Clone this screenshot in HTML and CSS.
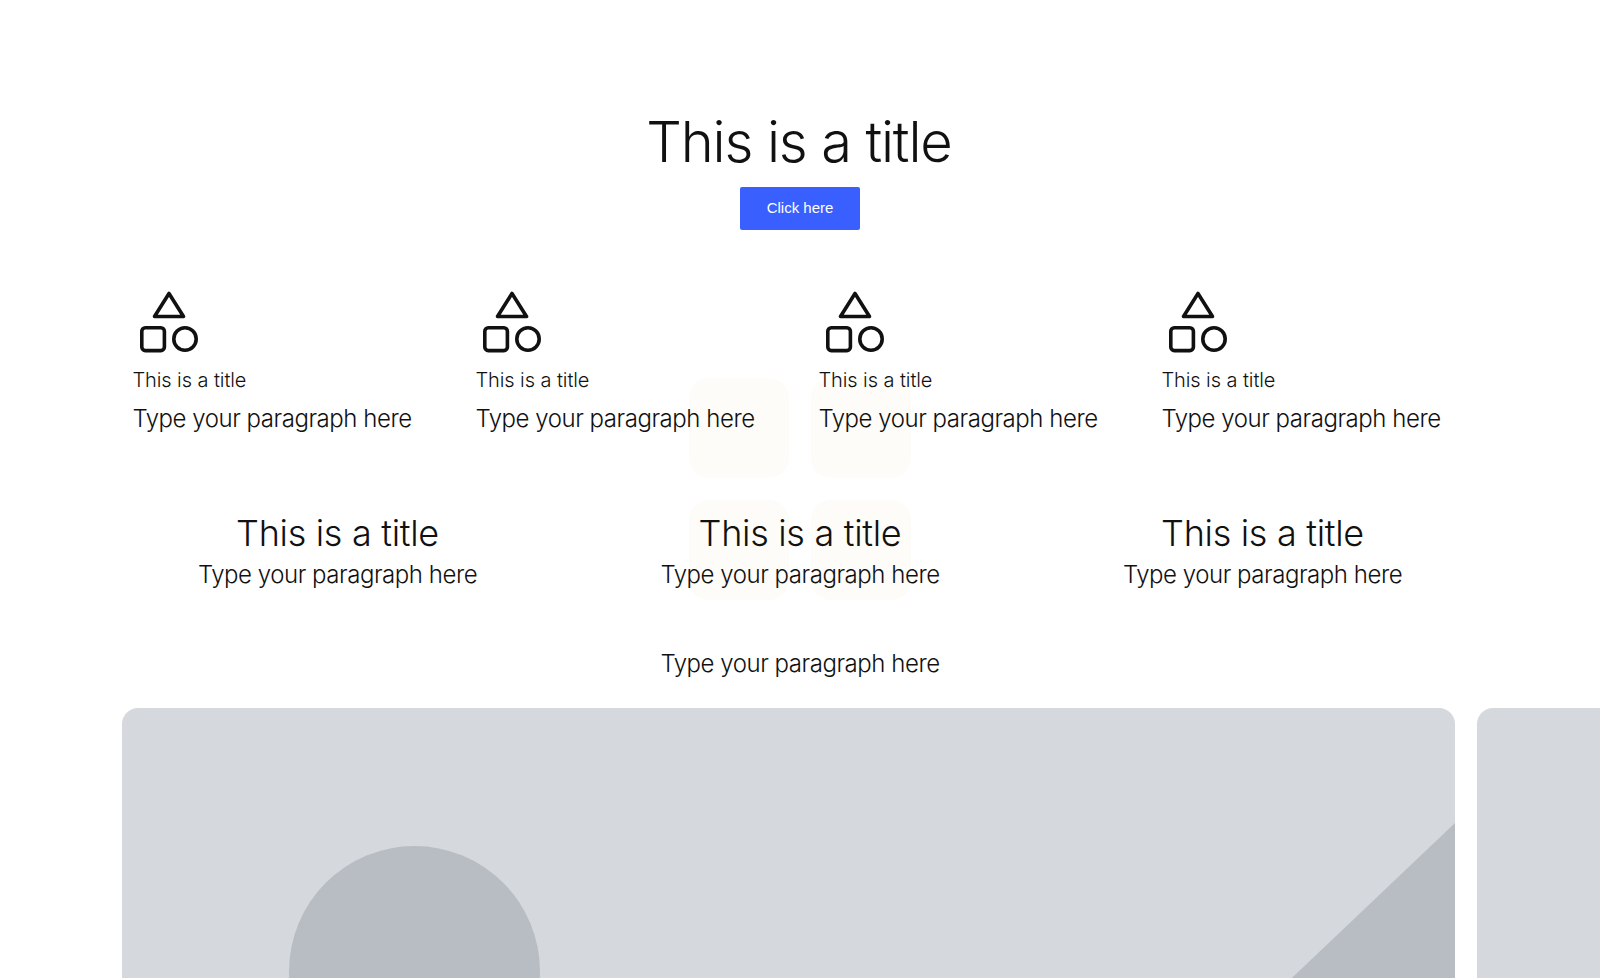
FILE: index.html
```html
<!DOCTYPE html>
<html lang="en">

<head>
    <meta charset="UTF-8">
    <meta name="viewport" content="width=device-width, initial-scale=1.0">
    <link rel="stylesheet" href="styles.css">
    <title>This is a title</title>
</head>

<body>

    <!-- decorative squares behind the text -->
    <div class="squares">
        <span></span>
        <span></span>
        <span></span>
        <span></span>
    </div>

    <section class="hero">
        <h1>This is a title</h1>
        <a class="button" href="#">Click here</a>
    </section>

    <section class="features">
        <div class="feature">
            <svg class="icon" viewBox="0 0 60 62" fill="none" stroke="#111" stroke-width="3.6" stroke-linejoin="round">
                <path d="M29 2.5 L43.5 25.5 H14.5 Z" />
                <rect x="1.8" y="36.8" width="22.6" height="22.8" rx="3.5" />
                <circle cx="45" cy="48" r="11.2" />
            </svg>
            <h3>This is a title</h3>
            <p>Type your paragraph here</p>
        </div>
        <div class="feature">
            <svg class="icon" viewBox="0 0 60 62" fill="none" stroke="#111" stroke-width="3.6" stroke-linejoin="round">
                <path d="M29 2.5 L43.5 25.5 H14.5 Z" />
                <rect x="1.8" y="36.8" width="22.6" height="22.8" rx="3.5" />
                <circle cx="45" cy="48" r="11.2" />
            </svg>
            <h3>This is a title</h3>
            <p>Type your paragraph here</p>
        </div>
        <div class="feature">
            <svg class="icon" viewBox="0 0 60 62" fill="none" stroke="#111" stroke-width="3.6" stroke-linejoin="round">
                <path d="M29 2.5 L43.5 25.5 H14.5 Z" />
                <rect x="1.8" y="36.8" width="22.6" height="22.8" rx="3.5" />
                <circle cx="45" cy="48" r="11.2" />
            </svg>
            <h3>This is a title</h3>
            <p>Type your paragraph here</p>
        </div>
        <div class="feature">
            <svg class="icon" viewBox="0 0 60 62" fill="none" stroke="#111" stroke-width="3.6" stroke-linejoin="round">
                <path d="M29 2.5 L43.5 25.5 H14.5 Z" />
                <rect x="1.8" y="36.8" width="22.6" height="22.8" rx="3.5" />
                <circle cx="45" cy="48" r="11.2" />
            </svg>
            <h3>This is a title</h3>
            <p>Type your paragraph here</p>
        </div>
    </section>

    <section class="columns">
        <div class="column">
            <h2>This is a title</h2>
            <p>Type your paragraph here</p>
        </div>
        <div class="column">
            <h2>This is a title</h2>
            <p>Type your paragraph here</p>
        </div>
        <div class="column">
            <h2>This is a title</h2>
            <p>Type your paragraph here</p>
        </div>
    </section>

    <p class="caption">Type your paragraph here</p>

    <section class="gallery">
        <div class="slide">
            <svg class="placeholder" viewBox="0 0 1333 400" preserveAspectRatio="none">
                <circle cx="292.5" cy="263.5" r="125.5" fill="#b8bdc4" />
                <path d="M1333 115 L1033 400 H1333 Z" fill="#b8bdc4" />
            </svg>
        </div>
        <div class="slide"></div>
    </section>

</body>

</html>
```

FILE: styles.css
```css
* {
    box-sizing: border-box;
}

body {
    font-family: 'Inter', sans-serif;
    font-weight: 300;
    color: #111;
    background: #fff;
    margin: 0;
    padding: 0;
    position: relative;
    height: 100vh;
    overflow: hidden;
}

h1,
h2,
h3,
p {
    margin: 0;
    font-weight: 300;
}

p {
    font-size: 24px;
    line-height: 32px;
    letter-spacing: -0.46px;
}

.squares {
    position: absolute;
    top: 378px;
    left: 689px;
    display: grid;
    grid-template-columns: 100px 100px;
    grid-auto-rows: 100px;
    gap: 22px;
    z-index: -1;
}

.squares span {
    background-color: #fdfcf8;
    border-radius: 20px;
}

.hero {
    display: flex;
    flex-direction: column;
    align-items: center;
    padding-top: 108px;
}

.hero h1 {
    font-size: 56px;
    line-height: 68px;
    letter-spacing: -1.15px;
    margin-left: -2px;
}

.button {
    display: block;
    width: 120px;
    height: 43px;
    margin-top: 11px;
    background-color: #3a5fff;
    border-radius: 2px;
    color: #fff;
    font-family: 'Liberation Sans', sans-serif;
    font-weight: 400;
    font-size: 15px;
    line-height: 42px;
    text-align: center;
    text-decoration: none;
}

.features {
    display: grid;
    grid-template-columns: repeat(4, 343px);
    padding: 61px 0 0 132.4px;
}

.icon {
    display: block;
    width: 60px;
    height: 62px;
    margin-left: 7.5px;
}

.feature h3 {
    font-size: 20px;
    line-height: 28px;
    font-weight: 350;
    letter-spacing: -0.08px;
    margin-top: 13px;
}

.feature p {
    margin-top: 9px;
}

.columns {
    display: grid;
    grid-template-columns: repeat(3, 462.5px);
    justify-content: center;
    padding-top: 76px;
    text-align: center;
}

.column h2 {
    font-size: 36px;
    line-height: 44px;
    letter-spacing: -0.3px;
}

.column p {
    margin-top: 4px;
}

.caption {
    margin-top: 57px;
    text-align: center;
}

.gallery {
    display: flex;
    gap: 21.5px;
    margin-top: 28px;
    padding-left: 122.3px;
}

.slide {
    flex: 0 0 1333px;
    height: 400px;
    background-color: #d5d8dc;
    border-radius: 16px;
    overflow: hidden;
}

.placeholder {
    display: block;
    width: 100%;
    height: 100%;
}
```
